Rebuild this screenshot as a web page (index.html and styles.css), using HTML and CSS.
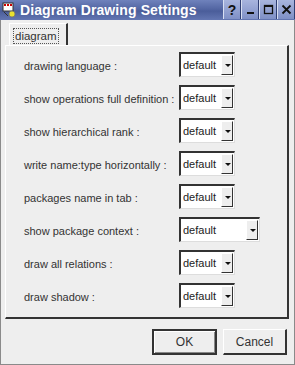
FILE: index.html
```html
<!DOCTYPE html>
<html>
<head>
<meta charset="utf-8">
<link rel="stylesheet" href="styles.css">
</head>
<body>
<div class="window">
  <div class="titlebar">
    <svg class="appicon" width="16" height="16" viewBox="0 0 16 16">
      <rect x="1" y="1" width="10" height="8" fill="#fff" stroke="#333" stroke-width="1"/>
      <rect x="2" y="2" width="2" height="2" fill="#c00"/>
      <rect x="5" y="2" width="2" height="2" fill="#c00"/>
      <rect x="8" y="2" width="2" height="2" fill="#c00"/>
      <path d="M2 10 L6 14" stroke="#333" stroke-width="1"/>
      <circle cx="10" cy="12" r="3" fill="#e8e030" stroke="#776" stroke-width="0.8"/>
    </svg>
    <span class="title">Diagram Drawing Settings</span>
    <div class="tbuttons">
      <span class="tbtn">?</span>
      <span class="tbtn"><svg width="11" height="11" viewBox="0 0 11 11"><rect x="2" y="8" width="7" height="2" fill="#111"/></svg></span>
      <span class="tbtn"><svg width="11" height="11" viewBox="0 0 11 11"><rect x="1.5" y="1.5" width="8" height="8" fill="none" stroke="#111" stroke-width="1.3"/><rect x="1" y="1" width="9" height="2" fill="#111"/></svg></span>
      <span class="tbtn"><svg width="11" height="11" viewBox="0 0 11 11"><path d="M1.5 1.5 L9.5 9.5 M9.5 1.5 L1.5 9.5" stroke="#111" stroke-width="1.8"/></svg></span>
    </div>
  </div>
  <div class="content">
    <div class="tabbar">
      <div class="tab"><span class="tablabel">diagram</span></div>
    </div>
    <div class="pane">
      <div class="grid">
        <div class="label">drawing language :</div><div class="combo"><span>default</span><i></i></div>
        <div class="label">show operations full definition :</div><div class="combo"><span>default</span><i></i></div>
        <div class="label">show hierarchical rank :</div><div class="combo"><span>default</span><i></i></div>
        <div class="label">write name:type horizontally :</div><div class="combo"><span>default</span><i></i></div>
        <div class="label">packages name in tab :</div><div class="combo"><span>default</span><i></i></div>
        <div class="label">show package context :</div><div class="combo wide"><span>default</span><i></i></div>
        <div class="label">draw all relations :</div><div class="combo"><span>default</span><i></i></div>
        <div class="label">draw shadow :</div><div class="combo"><span>default</span><i></i></div>
      </div>
    </div>
    <div class="footer">
      <button class="btn ok">OK</button>
      <button class="btn cancel">Cancel</button>
    </div>
  </div>
</div>
</body>
</html>
```

FILE: styles.css
```css
html, body { margin: 0; padding: 0; background: #eeeeee; }
body { font-family: "Liberation Sans", Arial, sans-serif; font-size: 11px; color: #333; }
.window {
  width: 295px; height: 365px; box-sizing: border-box;
  border: 1px solid #8a8a8a; border-top: none;
  background: #eeeeee; display: flex; flex-direction: column;
}
.titlebar {
  height: 20px; display: flex; align-items: center;
  background: linear-gradient(to bottom, #6f82bc 0%, #5366a3 45%, #4a5d9a 55%, #6376b2 100%);
  margin: 0 -1px; padding-left: 2px;
}
.appicon { flex: none; }
.title { color: #fff; font-weight: bold; font-size: 14px; margin-left: 2px; letter-spacing: 0.1px; flex: 1; white-space: nowrap; }
.tbuttons { display: flex; height: 20px; }
.tbtn {
  width: 18px; height: 19px; box-sizing: border-box;
  border-left: 1px solid #d8dff2; border-right: 1px solid #2f3f73;
  background: linear-gradient(to bottom, #a8b5de, #7f90c6);
  display: flex; align-items: center; justify-content: center;
  font-weight: bold; font-size: 14px; color: #111;
}
.content { flex: 1; display: flex; flex-direction: column; padding: 3px 5px 0 4px; }
.tabbar { display: flex; height: 22px; padding-left: 4px; }
.tab {
  height: 22px; box-sizing: border-box; padding: 4px 7px 0 3px;
  border-top: 1px solid #fff; border-left: 1px solid #fff; border-right: 2px solid #333;
}
.tablabel { display: inline-block; border: 1px dotted #555; padding: 1px 1px 1px 1px; line-height: 12px; font-size: 11.5px; }
.pane {
  height: 274px; box-sizing: border-box;
  border-top: 1px solid #fff; border-left: 1px solid #fff;
  border-right: 2px solid #333; border-bottom: 2px solid #333;
  padding: 6px 0 0 18px;
}
.grid { display: grid; grid-template-columns: 155px auto; row-gap: 8px; align-items: center; }
.label { white-space: nowrap; font-size: 11px; color: #333; padding-top: 2px; }
.combo {
  width: 56px; height: 25px; box-sizing: border-box; background: #fff;
  border-top: 2px solid #333; border-left: 2px solid #333;
  border-right: 1px solid #ddd; border-bottom: 1px solid #ddd;
  display: flex; align-items: center; justify-content: space-between;
}
.combo.wide { width: 81px; }
.combo span { padding-left: 2px; font-size: 11px; color: #222; }
.combo i {
  width: 12px; height: 20px; box-sizing: border-box; position: relative; display: block;
  background: #eeeeee; border-left: 1px solid #fff; border-top: 1px solid #fff;
  border-right: 1px solid #333; border-bottom: 1px solid #333; margin-right: 1px;
}
.combo i::after {
  content: ""; position: absolute; left: 3px; top: 8px;
  border-left: 3px solid transparent; border-right: 3px solid transparent; border-top: 3px solid #111;
}
.footer { display: flex; justify-content: flex-end; gap: 6px; padding-top: 10px; padding-right: 2px; }
.btn {
  font-family: inherit; font-size: 12px; color: #333; background: #eeeeee;
  height: 26px; box-sizing: border-box; margin: 0; padding: 0;
  border-top: 1px solid #fff; border-left: 1px solid #fff;
  border-right: 2px solid #333; border-bottom: 2px solid #333;
}
.btn.ok { width: 65px; border: 2px solid #333; box-shadow: inset 1px 1px 0 #fff, inset -1px -1px 0 #888; }
.btn.cancel { width: 64px; }
```
